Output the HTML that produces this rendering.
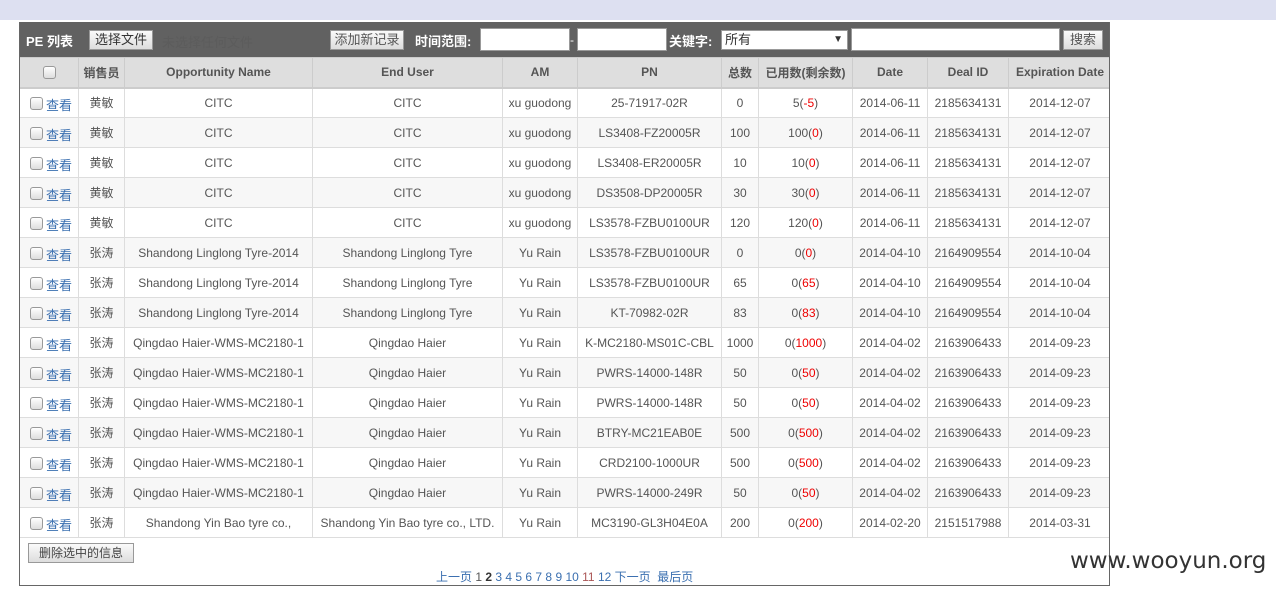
<!DOCTYPE html>
<html><head><meta charset="utf-8"><style>
*{box-sizing:border-box;margin:0;padding:0}
body{width:1276px;height:591px;background:#fff;font-family:"Liberation Sans","Noto Sans CJK SC",sans-serif;position:relative;overflow:hidden;font-size:12px;color:#555}
.band{position:absolute;left:0;top:0;width:1276px;height:20px;background:#dde0f1}
.wrap{position:absolute;left:19px;top:22px;width:1091px;height:564px;border:1px solid #666;border-top:none;overflow:hidden}
.tb{position:absolute;left:0;top:0;width:1090px;height:35px;background:#616161}
.tb *{position:absolute}
.lbl{color:#fff;font-weight:bold;font-size:13px;top:9px}
.btn{background:linear-gradient(#fafafa,#ddd);border:1px solid #999;color:#333;font-size:13px;text-align:center;line-height:18px;height:20px}
.inp{background:#fff;border:1px solid #999;height:23px;top:6px}
table{position:absolute;left:-1px;top:35px;border-collapse:collapse;table-layout:fixed;width:1092px}
td,th{border:1px solid #ddd;text-align:center;height:30px;font-size:12px;white-space:nowrap;overflow:hidden}
th{background:#dedede;color:#555;font-weight:bold;height:30px;border-color:#ccc;border-bottom:2px solid #ccc}
tr:nth-child(odd) td{background:#f7f7f7}
.cb{display:inline-block;width:13px;height:13px;border:1px solid #999;border-radius:3px;background:linear-gradient(#fff,#ddd);vertical-align:middle;margin-top:-6px}
a{color:#3a6fb0;text-decoration:none;font-size:13px;display:inline-block;margin-top:3px;margin-left:3px}
.r{color:#e00}
td:first-child{text-align:left;padding-left:10px}
</style></head><body>
<div class="band"></div>
<div class="wrap">
<div class="tb">
<span class="lbl" style="left:6px">PE 列表</span>
<span class="btn" style="left:69px;top:8px;width:64px">选择文件</span>
<span style="left:142px;top:10px;color:#5c5c5c;font-size:13px">未选择任何文件</span>
<span class="btn" style="left:310px;top:8px;width:74px;color:#555">添加新记录</span>
<span class="lbl" style="left:395px">时间范围:</span>
<span class="inp" style="left:460px;width:90px"></span>
<span style="left:550px;top:11px;color:#fff">-</span>
<span class="inp" style="left:557px;width:90px"></span>
<span class="lbl" style="left:649px">关键字:</span>
<span class="inp" style="left:701px;top:8px;width:127px;height:20px;font-size:13px;color:#333;padding-left:3px;line-height:18px">所有<span style="right:4px;top:0;font-size:10px">▼</span></span>
<span class="inp" style="left:831px;top:6px;width:209px"></span>
<span class="btn" style="left:1043px;top:8px;width:40px;color:#555">搜索</span>
</div>
<table>
<colgroup><col style="width:59px"><col style="width:46px"><col style="width:188px"><col style="width:190px"><col style="width:75px"><col style="width:144px"><col style="width:37px"><col style="width:94px"><col style="width:75px"><col style="width:81px"><col style="width:103px"></colgroup>
<tr><th style="text-align:center;padding:0"><span class="cb" style="margin:0"></span></th><th>销售员</th><th>Opportunity Name</th><th>End User</th><th>AM</th><th>PN</th><th>总数</th><th>已用数(剩余数)</th><th>Date</th><th>Deal ID</th><th>Expiration Date</th></tr>
<tr><td><span class="cb"></span><a>查看</a></td><td>黄敏</td><td>CITC</td><td>CITC</td><td>xu guodong</td><td>25-71917-02R</td><td>0</td><td>5(<span class="r">-5</span>)</td><td>2014-06-11</td><td>2185634131</td><td>2014-12-07</td></tr>
<tr><td><span class="cb"></span><a>查看</a></td><td>黄敏</td><td>CITC</td><td>CITC</td><td>xu guodong</td><td>LS3408-FZ20005R</td><td>100</td><td>100(<span class="r">0</span>)</td><td>2014-06-11</td><td>2185634131</td><td>2014-12-07</td></tr>
<tr><td><span class="cb"></span><a>查看</a></td><td>黄敏</td><td>CITC</td><td>CITC</td><td>xu guodong</td><td>LS3408-ER20005R</td><td>10</td><td>10(<span class="r">0</span>)</td><td>2014-06-11</td><td>2185634131</td><td>2014-12-07</td></tr>
<tr><td><span class="cb"></span><a>查看</a></td><td>黄敏</td><td>CITC</td><td>CITC</td><td>xu guodong</td><td>DS3508-DP20005R</td><td>30</td><td>30(<span class="r">0</span>)</td><td>2014-06-11</td><td>2185634131</td><td>2014-12-07</td></tr>
<tr><td><span class="cb"></span><a>查看</a></td><td>黄敏</td><td>CITC</td><td>CITC</td><td>xu guodong</td><td>LS3578-FZBU0100UR</td><td>120</td><td>120(<span class="r">0</span>)</td><td>2014-06-11</td><td>2185634131</td><td>2014-12-07</td></tr>
<tr><td><span class="cb"></span><a>查看</a></td><td>张涛</td><td>Shandong Linglong Tyre-2014</td><td>Shandong Linglong Tyre</td><td>Yu Rain</td><td>LS3578-FZBU0100UR</td><td>0</td><td>0(<span class="r">0</span>)</td><td>2014-04-10</td><td>2164909554</td><td>2014-10-04</td></tr>
<tr><td><span class="cb"></span><a>查看</a></td><td>张涛</td><td>Shandong Linglong Tyre-2014</td><td>Shandong Linglong Tyre</td><td>Yu Rain</td><td>LS3578-FZBU0100UR</td><td>65</td><td>0(<span class="r">65</span>)</td><td>2014-04-10</td><td>2164909554</td><td>2014-10-04</td></tr>
<tr><td><span class="cb"></span><a>查看</a></td><td>张涛</td><td>Shandong Linglong Tyre-2014</td><td>Shandong Linglong Tyre</td><td>Yu Rain</td><td>KT-70982-02R</td><td>83</td><td>0(<span class="r">83</span>)</td><td>2014-04-10</td><td>2164909554</td><td>2014-10-04</td></tr>
<tr><td><span class="cb"></span><a>查看</a></td><td>张涛</td><td>Qingdao Haier-WMS-MC2180-1</td><td>Qingdao Haier</td><td>Yu Rain</td><td>K-MC2180-MS01C-CBL</td><td>1000</td><td>0(<span class="r">1000</span>)</td><td>2014-04-02</td><td>2163906433</td><td>2014-09-23</td></tr>
<tr><td><span class="cb"></span><a>查看</a></td><td>张涛</td><td>Qingdao Haier-WMS-MC2180-1</td><td>Qingdao Haier</td><td>Yu Rain</td><td>PWRS-14000-148R</td><td>50</td><td>0(<span class="r">50</span>)</td><td>2014-04-02</td><td>2163906433</td><td>2014-09-23</td></tr>
<tr><td><span class="cb"></span><a>查看</a></td><td>张涛</td><td>Qingdao Haier-WMS-MC2180-1</td><td>Qingdao Haier</td><td>Yu Rain</td><td>PWRS-14000-148R</td><td>50</td><td>0(<span class="r">50</span>)</td><td>2014-04-02</td><td>2163906433</td><td>2014-09-23</td></tr>
<tr><td><span class="cb"></span><a>查看</a></td><td>张涛</td><td>Qingdao Haier-WMS-MC2180-1</td><td>Qingdao Haier</td><td>Yu Rain</td><td>BTRY-MC21EAB0E</td><td>500</td><td>0(<span class="r">500</span>)</td><td>2014-04-02</td><td>2163906433</td><td>2014-09-23</td></tr>
<tr><td><span class="cb"></span><a>查看</a></td><td>张涛</td><td>Qingdao Haier-WMS-MC2180-1</td><td>Qingdao Haier</td><td>Yu Rain</td><td>CRD2100-1000UR</td><td>500</td><td>0(<span class="r">500</span>)</td><td>2014-04-02</td><td>2163906433</td><td>2014-09-23</td></tr>
<tr><td><span class="cb"></span><a>查看</a></td><td>张涛</td><td>Qingdao Haier-WMS-MC2180-1</td><td>Qingdao Haier</td><td>Yu Rain</td><td>PWRS-14000-249R</td><td>50</td><td>0(<span class="r">50</span>)</td><td>2014-04-02</td><td>2163906433</td><td>2014-09-23</td></tr>
<tr><td><span class="cb"></span><a>查看</a></td><td>张涛</td><td>Shandong Yin Bao tyre co.,</td><td>Shandong Yin Bao tyre co., LTD.</td><td>Yu Rain</td><td>MC3190-GL3H04E0A</td><td>200</td><td>0(<span class="r">200</span>)</td><td>2014-02-20</td><td>2151517988</td><td>2014-03-31</td></tr>
</table>
<span class="btn" style="position:absolute;left:8px;top:521px;width:106px;color:#444;font-size:12px">删除选中的信息</span>
<div style="position:absolute;left:416px;top:546px;font-size:12px;color:#3a6fb0;white-space:nowrap">上一页 <span style="color:#555">1</span> <b style="color:#333">2</b> 3 4 5 6 7 8 9 10 <span style="color:#a55">11</span> 12 下一页 &nbsp;最后页</div>
</div>
<div style="position:absolute;left:1070px;top:548px;font-size:23px;color:#333;font-family:'DejaVu Sans',sans-serif">www.wooyun.org</div>
</body></html>
